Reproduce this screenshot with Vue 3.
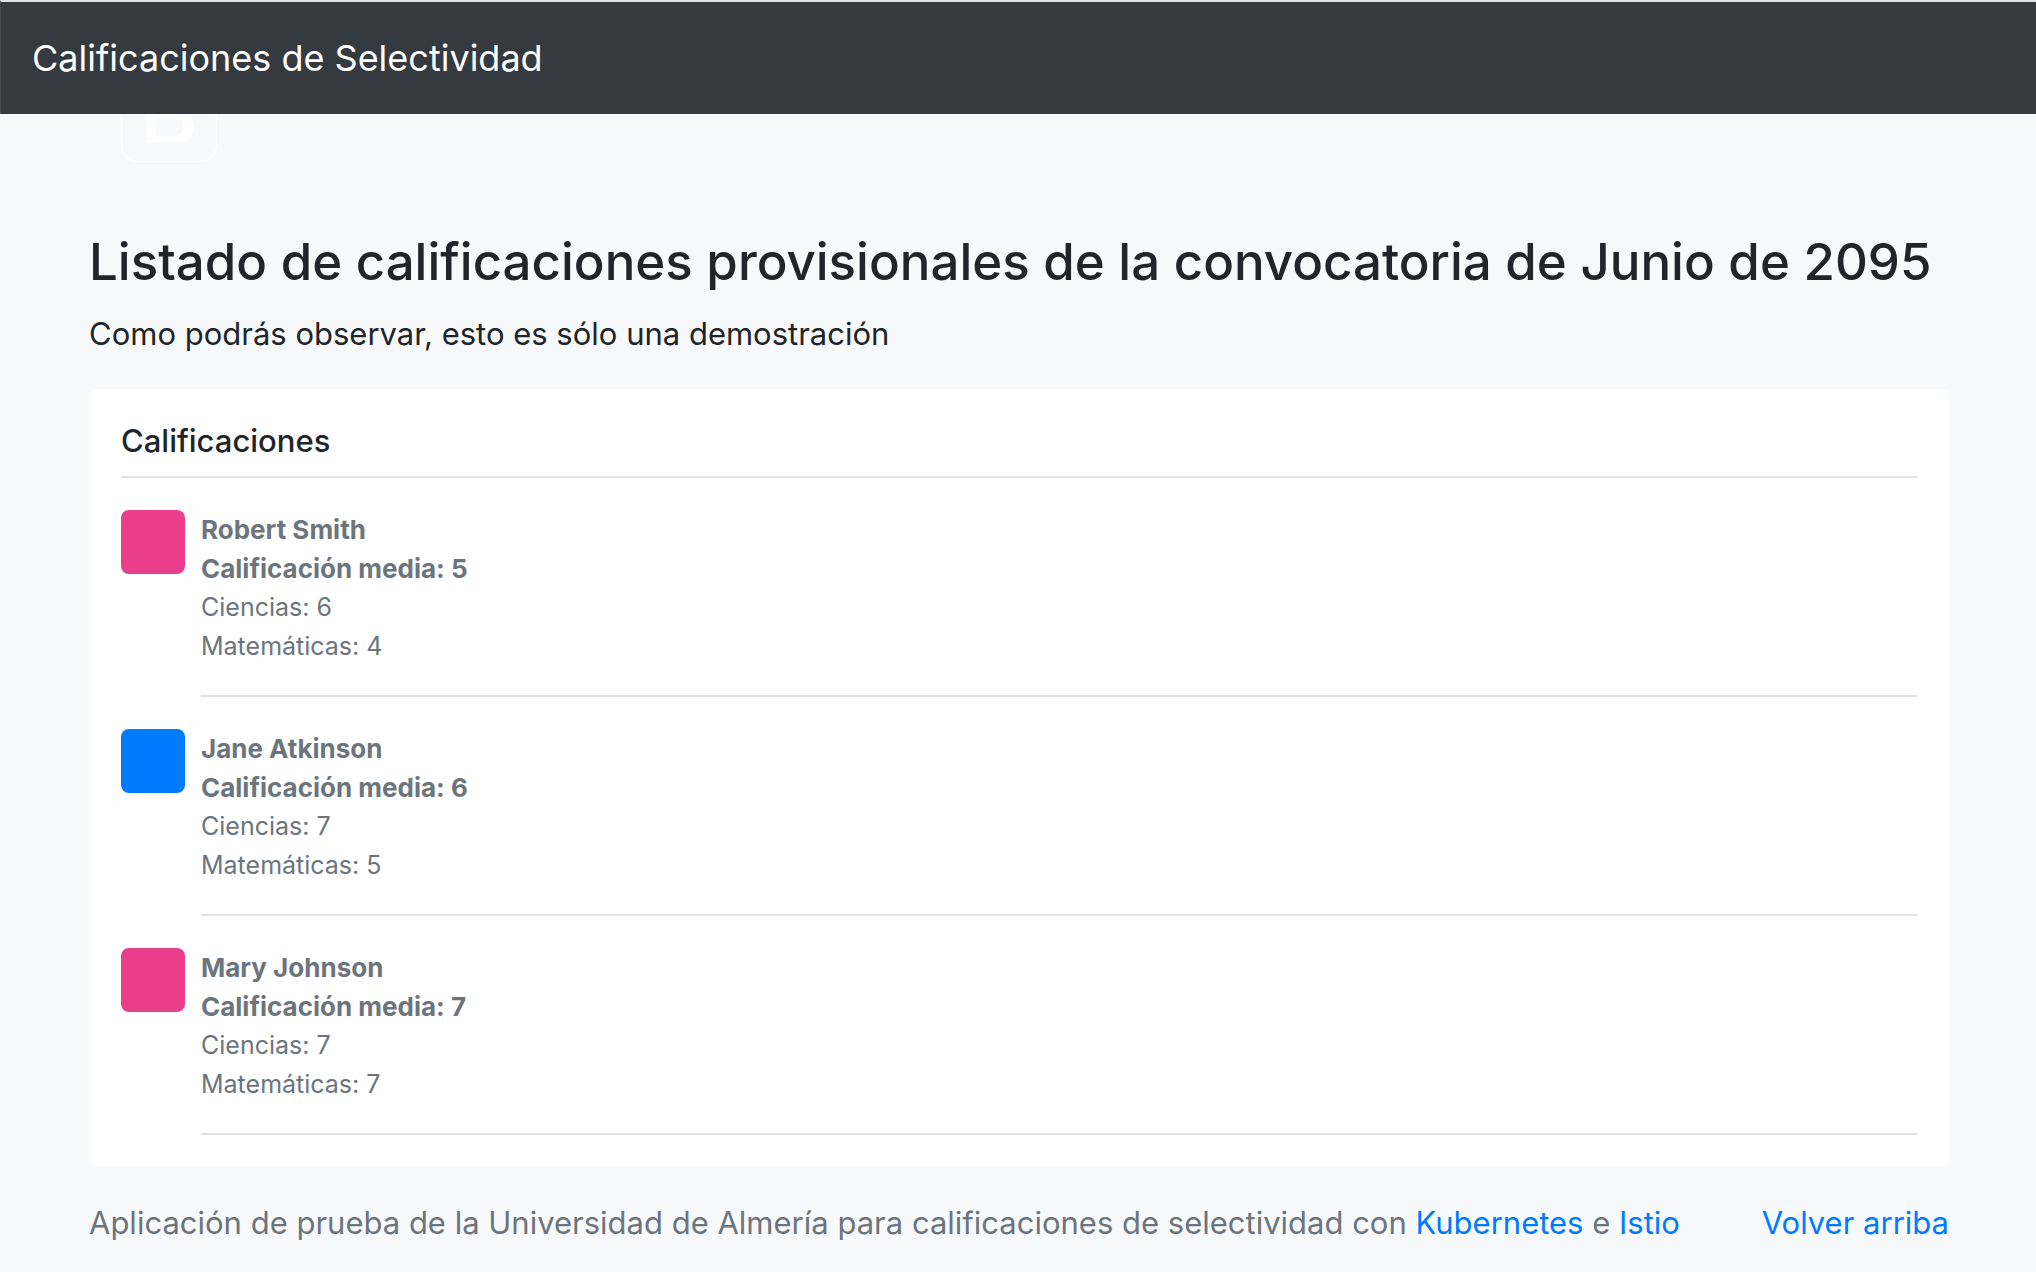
<script setup>
const students = [
  { name: 'Robert Smith', average: 5, science: 6, maths: 4, tone: 'pink' },
  { name: 'Jane Atkinson', average: 6, science: 7, maths: 5, tone: 'blue' },
  { name: 'Mary Johnson', average: 7, science: 7, maths: 7, tone: 'pink' },
]
</script>

<template>
  <div id="top" class="page">
    <header class="navbar">
      <a class="brand" href="#top">Calificaciones de Selectividad</a>
    </header>

    <main class="container">
      <div class="hero">
        <svg class="logo" viewBox="0 0 612 612" aria-hidden="true">
          <path d="M510 8a94.3 94.3 0 0 1 94 94v408a94.3 94.3 0 0 1-94 94H102a94.3 94.3 0 0 1-94-94V102a94.3 94.3 0 0 1 94-94h408m0-8H102C45.9 0 0 45.9 0 102v408c0 56.1 45.9 102 102 102h408c56.1 0 102-45.9 102-102V102C612 45.9 566.1 0 510 0z" />
          <path fill-rule="evenodd" d="M166.3 133h173.5c32.1 0 57.7 7.3 77 22 19.3 14.6 29 36.8 29 66.5 0 18-4.4 33.4-13.2 46.2-8.8 12.8-21.4 22.8-37.8 29.8v1c22 4.6 38.6 15.1 49.8 31.3 11.2 16.2 16.9 36.5 16.9 61 0 14.1-2.5 27.3-7.6 39.6-5.1 12.3-12.9 23-23.7 31.9-10.8 8.9-24.6 16-41.5 21.3-16.9 5.3-37 7.9-60.2 7.9H166.3V133zm62.2 145.6h101.9c15 0 27.5-4.2 37.5-12.7s15-20.6 15-36.5c0-17.9-4.5-30.6-13.5-37.8-9-7.2-22-10.8-39-10.8H228.5v97.8zm0 165.5h110.4c19 0 33.8-4.9 44.3-14.8 10.5-9.8 15.8-23.8 15.8-41.7 0-17.6-5.3-31.1-15.8-40.5-10.5-9.3-25.3-14-44.3-14H228.5v111z" />
        </svg>
      </div>

      <h1 class="title">Listado de calificaciones provisionales de la convocatoria de Junio de 2095</h1>
      <p class="lead">Como podrás observar, esto es sólo una demostración</p>

      <section class="card">
        <h2 class="card-title">Calificaciones</h2>
        <ul class="list">
          <li v-for="s in students" :key="s.name" class="student">
            <span class="avatar" :class="s.tone"></span>
            <div class="details">
              <strong>{{ s.name }}</strong>
              <strong>Calificación media: {{ s.average }}</strong>
              <span>Ciencias: {{ s.science }}</span>
              <span>Matemáticas: {{ s.maths }}</span>
            </div>
          </li>
        </ul>
      </section>

      <footer class="footer">
        <p>
          Aplicación de prueba de la Universidad de Almería para calificaciones de selectividad con
          <a href="#kubernetes">Kubernetes</a> e <a href="#istio">Istio</a>
        </p>
        <a href="#top">Volver arriba</a>
      </footer>
    </main>
  </div>
</template>

<style>
body {
  margin: 0;
  background: #f8f9fb;
}
</style>

<style scoped>
.page {
  font-family: Inter, "Liberation Sans", sans-serif;
  color: #212529;
}

.navbar {
  position: fixed;
  inset: 0 0 auto;
  z-index: 10;
  box-sizing: border-box;
  padding: 26px 31px;
  border-top: 2px solid #dee2e6;
  border-left: 1px solid #484e54;
  background: #343a40;
}

.brand {
  display: block;
  color: #fff;
  font-size: 36px;
  line-height: 60px;
  text-decoration: none;
}

.container {
  padding: 66px 87px 0 89px;
}

.hero {
  padding: 0 32px 66px;
}

.logo {
  display: block;
  width: 96px;
  height: 96px;
  fill: #fff;
}

.title {
  margin: 0;
  font-size: 51px;
  font-weight: 500;
  line-height: 68px;
}

.lead {
  margin: 14px 0 31px;
  font-size: 31px;
  line-height: 48px;
}

.card {
  padding: 32px;
  border-radius: 8px;
  background: #fff;
}

.card-title {
  margin: 0;
  padding-bottom: 15px;
  border-bottom: 2px solid #dee2e6;
  font-size: 31px;
  font-weight: 500;
  line-height: 40px;
}

.list {
  margin: 0;
  padding: 0;
  list-style: none;
}

.student {
  display: flex;
  gap: 16px;
  padding-top: 32px;
  color: #6c757d;
}

.avatar {
  flex: none;
  width: 64px;
  height: 64px;
  border-radius: 8px;
}

.pink {
  background: #e83e8c;
}

.blue {
  background: #007bff;
}

.details {
  display: flex;
  flex: 1;
  flex-direction: column;
  padding-bottom: 29px;
  border-bottom: 2px solid #dee2e6;
  font-size: 25px;
  line-height: 39px;
}

.details strong {
  font-size: 26px;
}

.footer {
  display: flex;
  justify-content: space-between;
  padding: 32px 0 16px;
  color: #6c757d;
  font-size: 31px;
  line-height: 48px;
}

.footer p {
  margin: 0;
}

.footer a {
  color: #007bff;
  text-decoration: none;
}
</style>
